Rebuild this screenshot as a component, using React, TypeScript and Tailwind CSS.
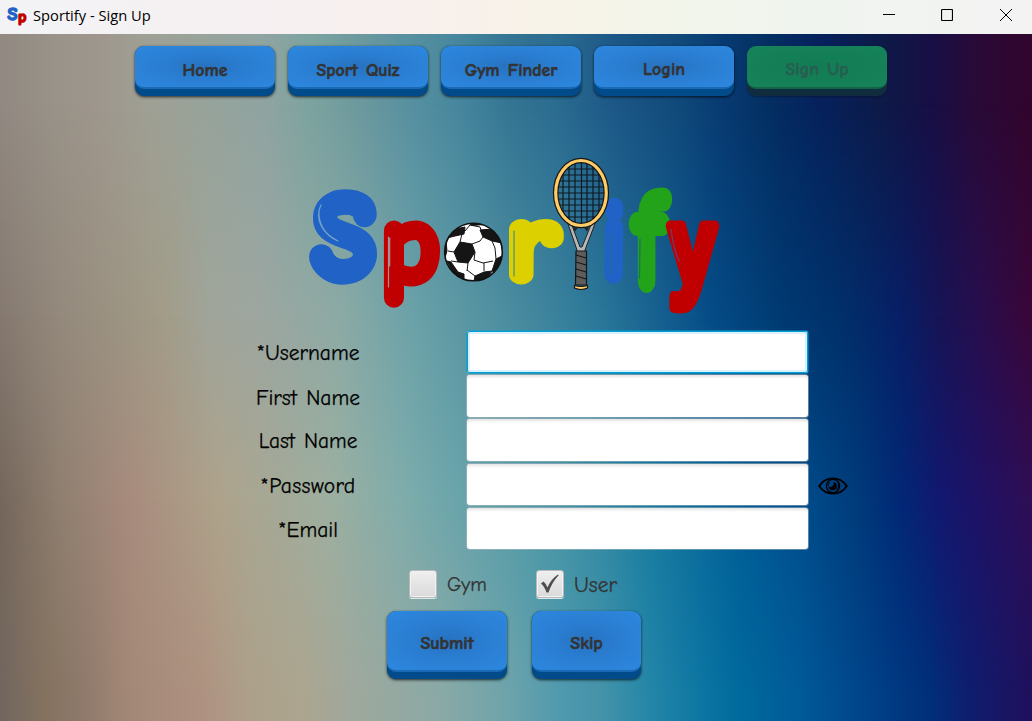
import React, { useState } from "react";

type NavItem = { label: string; disabled?: boolean; raised?: boolean };

const navItems: NavItem[] = [
  { label: "Home" },
  { label: "Sport Quiz" },
  { label: "Gym Finder" },
  { label: "Login", raised: true },
  { label: "Sign Up", disabled: true, raised: true },
];

const comic = "font-['Comic_Sans_MS','Comic_Neue','Open_Sans',sans-serif]";
const logoFont = "'Comic Sans MS', 'Comic Neue', 'Open Sans', sans-serif";
const hookFont = "'Liberation Sans', sans-serif";

function Backdrop() {
  return (
    <div className="absolute inset-0">
      <div className="absolute inset-0 bg-[linear-gradient(90deg,#928982_0px,#989288_50px,#9f978d_100px,#9fa095_150px,#98a39a_200px,#8fa4a2_265px,#7ca39f_310px,#6c999e_360px,#5790a0_410px,#46869d_460px,#347593_510px,#2a6b90_560px,#1c5787_615px,#10497a_680px,#083b72_720px,#042e62_770px,#06215c_820px,#0d1a48_880px,#170f45_930px,#290a38_975px,#31052c_1032px)]" />
      <div className="absolute inset-0 bg-[linear-gradient(90deg,#857970_0px,#94897c_60px,#a29c88_165px,#a0a59a_210px,#9da6a0_260px,#8caaa5_340px,#6ca2a8_410px,#4f8fa0_500px,#2a7799_600px,#054c87_710px,#003a72_780px,#01306a_840px,#071f66_900px,#171455_940px,#280e4d_980px,#3a0638_1032px)] [mask-image:linear-gradient(180deg,transparent_10%,black_41%)]" />
      <div className="absolute inset-0 bg-[linear-gradient(90deg,#74665b_0px,#8f7f70_60px,#a88b7d_130px,#aea38b_220px,#a4a997_280px,#9dafa0_330px,#80adab_400px,#69a4ab_460px,#4595a5_560px,#177ba0_650px,#005d97_740px,#004d8c_800px,#003a7a_860px,#022876_900px,#121870_940px,#1f1265_980px,#2f0e55_1032px)] [mask-image:linear-gradient(180deg,transparent_41%,black_68%)]" />
      <div className="absolute inset-0 bg-[linear-gradient(90deg,#71665e_0px,#84725f_45px,#8f7a6b_85px,#a48877_130px,#ae9180_200px,#ada08a_250px,#aca58f_300px,#a0a89c_350px,#8aa9a6_440px,#6ca3ab_510px,#5099ae_560px,#4593a9_600px,#2486a8_650px,#0d76a2_700px,#006a9d_740px,#005a98_800px,#00458a_860px,#002f79_930px,#0f1d6e_970px,#1f105c_1032px)] [mask-image:linear-gradient(180deg,transparent_68%,black_96%)]" />
    </div>
  );
}

type Box = [number, number, number, number];
type GlyphProps = { ch: string; fill: string; box: Box; weight?: number; font?: string };

/* Ink bounds of one bold character set at 100px, relative to its origin. */
function inkBounds(ch: string, font: string): Box {
  const ctx = document.createElement("canvas").getContext("2d");
  if (!ctx) return [5, -70, 55, 0];
  ctx.font = `700 100px ${font}`;
  const m = ctx.measureText(ch);
  return [-m.actualBoundingBoxLeft, -m.actualBoundingBoxAscent, m.actualBoundingBoxRight, m.actualBoundingBoxDescent];
}

/* Stretches one character so that its ink, outline included, fills the given box. */
function Glyph({ ch, fill, box, weight = 8, font = logoFont }: GlyphProps) {
  const [x0, y0, x1, y1] = box;
  const [gx0, gy0, gx1, gy1] = inkBounds(ch, font);
  const sx = (x1 - x0) / (gx1 - gx0 + weight);
  const sy = (y1 - y0) / (gy1 - gy0 + weight);
  const tx = x0 - (gx0 - weight / 2) * sx;
  const ty = y0 - (gy0 - weight / 2) * sy;
  return (
    <text
      transform={`matrix(${sx} 0 0 ${sy} ${tx} ${ty})`}
      fontSize="100"
      fontWeight="700"
      fontFamily={font}
      fill={fill}
      stroke={fill}
      strokeWidth={weight}
      strokeLinejoin="round"
    >
      {ch}
    </text>
  );
}

function Logo() {
  return (
    <svg width="430" height="170" viewBox="300 150 430 170" className="block">
      <Glyph ch="S" fill="#2062c6" weight={12} box={[309, 188, 378, 285]} />
      <Glyph ch="p" fill="#c00000" weight={8} box={[384, 221, 441, 308]} />
      <Glyph ch="r" fill="#dcd000" weight={9} box={[509, 219, 564, 285]} />
      <Glyph ch="i" fill="#2062c6" weight={8} box={[604.5, 199, 624, 285]} />
      <Glyph ch="f" fill="#22a31a" weight={8} box={[628, 188, 673, 293]} />
      <Glyph ch="y" fill="#c00000" weight={10} font={hookFont} box={[665, 220, 720, 314]} />
      <g fill="none" strokeLinecap="round" strokeWidth="1.200">
        <path d="M321 205c-7 14 2 29 17 36M319 211c-1 12 6 22 12 26" stroke="#74a4c4" />
        <path d="M388.500 237v50M389.700 238v28" stroke="#a98d91" />
        <path d="M514 231v45" stroke="#4c8a86" />
        <path d="M610.500 234v40" stroke="#206d9e" />
        <path d="M640 239l-.5 39" stroke="#166f78" />
        <path d="M671 229q2 18 8 32" stroke="#68406c" />
      </g>
      <g>
        <defs>
          <clipPath id="ball"><circle cx="473.500" cy="252" r="29" /></clipPath>
        </defs>
        <circle cx="473.500" cy="252" r="29" fill="#fff" />
        <g clipPath="url(#ball)" fill="#151515" stroke="#151515" strokeWidth="1" strokeLinejoin="round">
          <path d="M460 242l12 2 3 8-7 11-10-1-4-10Z" />
          <path d="M480 230l13-1 9 8 0 6-10-2-9-4Z" />
          <path d="M447 238l8-9 10-2-1 7-9 2Z" />
          <path d="M468 222.500h18l-2 2-12 1Z" />
          <path d="M443 244l3-3 1 10-3 10Z" />
          <path d="M447 261l4 1 7 10 6 2v8l-10-7Z" />
          <path d="M475 276l9-4 8-1-6 9-12 1Z" />
          <path d="M496 259l6-3 1 4-8 12-3-1Z" />
          <path d="M501 240l2 10" />
          <g fill="none">
            <path d="M460 242l2-8 1-1M472 244l8-3 3-4M475 252l-1 8 9 3 10-2M468 263l-1 8M458 262l-7-1M454 252l-6-1M465 231l5-6 10 2 1 3M492 241l3 7 1 11M484 263l0 8M467 270l8 6" />
          </g>
        </g>
        <circle cx="473.500" cy="252" r="28.800" fill="none" stroke="#111" strokeWidth="1.600" />
      </g>
      <g>
        <defs>
          <clipPath id="strings"><ellipse cx="581" cy="193" rx="23" ry="31.500" /></clipPath>
        </defs>
        <path d="M567 221l10 29v2h8v-2l11-29-3-1-11 27h-2l-10-27Z" fill="#b7b7b7" stroke="#222" strokeWidth="1" />
        <path d="M573 227.500h5l-3 4Zm16 0h-5l3 4Z" fill="#222" />
        <g clipPath="url(#strings)" stroke="#101820" strokeWidth="1.200">
          <path d="M563 160v66M569 160v66M575 160v66M581.500 160v66M587 160v66M593 160v66M599 160v66" />
          <path d="M555 169h52M555 175h52M555 181h52M555 187h52M555 193h52M555 199h52M555 205h52M555 211h52M555 217h52" />
        </g>
        <ellipse cx="581" cy="193" rx="25.300" ry="32.500" fill="none" stroke="#161616" strokeWidth="5.600" />
        <ellipse cx="581" cy="193" rx="25.300" ry="32.500" fill="none" stroke="#ffcc67" strokeWidth="3.200" />
        <path d="M576 251h10.500v34h-11Z" fill="#5d5d5d" stroke="#161616" strokeWidth="1.200" />
        <path d="M576 255l10 3M576 262l10 3M576 269l10 3M576 276l10 3" stroke="#161616" strokeWidth="1.200" />
        <path d="M574.500 285.500q6.500 2 13 0v2.500q-6.500 3-13 0Z" fill="#ffcc67" stroke="#161616" strokeWidth="1.200" />
      </g>
    </svg>
  );
}

type ButtonProps = NavItem & { size: string; text: string };

function GlossyButton({ label, disabled, raised, size, text }: ButtonProps) {
  const base = disabled
    ? "bg-[linear-gradient(180deg,#0e3a48_0%,#102c3e_100%)] shadow-[0_1px_2px_rgba(0,0,0,0.3)]"
    : "bg-[#024b8b] shadow-[0_1px_3px_rgba(0,0,0,0.75)]";
  const face = disabled
    ? "bg-[radial-gradient(ellipse_at_center,#127c54_0%,#17835b_100%)] text-[#265f50] border-b-[#126348]"
    : "bg-[radial-gradient(ellipse_at_center,#2772c0_0%,#2a7ed2_45%,#2d88df_100%)] text-[#333333] border-b-[#1a69b6]";
  return (
    <button disabled={disabled} className={`flex flex-col rounded-[9px] pb-[7px] ${size} ${base}`}>
      <span
        className={`flex w-full flex-1 items-center justify-center rounded-[9px] border-b-2 font-bold whitespace-nowrap [-webkit-text-stroke:0.6px_currentColor] ${raised ? "pt-[5px]" : "pt-[7px]"} ${face} ${text}`}
      >
        {label}
      </span>
    </button>
  );
}

function EyeIcon() {
  return (
    <svg width="30" height="20" viewBox="0 0 30 20" fill="none" stroke="#000">
      <path d="M1.200 10C8-.2 22-.2 28.800 10 22 20.200 8 20.200 1.200 10Z" strokeWidth="1.900" />
      <circle cx="15" cy="10" r="6.600" strokeWidth="1.300" />
      <path d="M15.500 6a4.200 4.200 0 1 1-5 4.500l2.500.5 2.500-2Z" fill="#000" stroke="none" />
      <path d="M12 6q-2 1.500-2 4M19.500 6a6 6 0 0 1-1 8" strokeWidth="1" />
    </svg>
  );
}

type FieldProps = { label: string; focused?: boolean; icon?: React.ReactNode; tune: string };

function Field({ label, focused, icon, tune }: FieldProps) {
  return (
    <label className="flex h-[44.200px] items-start">
      <span className="flex h-[44px] w-[104px] shrink-0 items-center justify-center pt-px whitespace-nowrap text-black [-webkit-text-stroke:0.25px_currentColor]">
        <span className={tune}>{label}</span>
      </span>
      <input
        className={
          "ml-[107px] h-[41.500px] w-[341px] rounded-[3px] bg-white px-2 outline-none " +
          (focused
            ? "shadow-[inset_0_0_0_1px_#039ed3,inset_0_0_0_3px_#d8f1fa,0_0_0_1px_#039ed380]"
            : "shadow-[0_0_0_1px_#b5bcc080,inset_0_3px_3px_-1px_#e4e4e4]")
        }
      />
      {icon && <span className="mt-3 ml-[10px]">{icon}</span>}
    </label>
  );
}

type CheckProps = { label: string; checked: boolean; onChange: () => void; width: string };

function Check({ label, checked, onChange, width }: CheckProps) {
  return (
    <button onClick={onChange} className="flex h-7 items-center gap-[10px] text-[#333333]">
      <span className="flex size-7 shrink-0 items-center justify-center rounded-[3px] border border-[#b9b9bb] bg-[linear-gradient(180deg,#efefef,#dadada)] shadow-[0_1px_0_#dce8e8,inset_0_0_0_1px_#f3f3f3]">
        {checked && (
          <svg width="20" height="20" viewBox="0 0 20 20">
            <path d="M1 9.500 3.500 7.500q2.500 2 4 6Q11 5 18 .5l.7.700Q12 8 8.500 18.500H6.500Q4.500 12.500 1 9.500Z" fill="#4d4d4d" />
          </svg>
        )}
      </span>
      <span className={`pt-[3px] text-left whitespace-nowrap [-webkit-text-stroke:0.25px_currentColor] ${width}`}>{label}</span>
    </button>
  );
}

export default function App() {
  const [role, setRole] = useState("User");
  return (
    <div className="flex h-[721px] w-[1032px] flex-col overflow-hidden">
      <header className="flex h-[34px] shrink-0 items-center bg-[linear-gradient(90deg,#f3f3f5_0%,#f6f0f2_25%,#f8f0ed_40%,#f8f3e8_54%,#f1f5eb_68%,#f0f4ef_80%,#f3f3f3_100%)] pl-[7px]">
        <svg width="21" height="22" viewBox="0 0 21 22" className="-mt-1">
          <text y="16" fontFamily={logoFont} fontWeight="700" strokeWidth="1.600" strokeLinejoin="round">
            <tspan x="0.500" fontSize="18" fill="#2062c6" stroke="#2062c6">S</tspan>
            <tspan x="11" y="17.500" fontSize="16" fill="#c00000" stroke="#c00000">p</tspan>
          </text>
        </svg>
        <h1 className="-mt-[3px] ml-[5px] font-['Open_Sans',sans-serif] text-[14.700px] text-black">Sportify - Sign Up</h1>
        <div className="-mt-1 mr-5 ml-auto flex items-center gap-[46px]">
          <svg width="12" height="12" viewBox="0 0 12 12" stroke="#000" className="relative -left-px"><path d="M0 5.500h12" /></svg>
          <svg width="12" height="12" viewBox="0 0 12 12" fill="none" stroke="#000" className="relative -left-px"><rect x=".5" y=".5" width="11" height="11" rx="1" strokeWidth="1.200" /></svg>
          <svg width="12" height="12" viewBox="0 0 12 12" stroke="#000"><path d="M0 0l12 12M12 0 0 12" /></svg>
        </div>
      </header>
      <main className={`relative flex-1 ${comic}`}>
        <Backdrop />
        <div className="relative flex flex-col">
          <nav className="flex gap-[13px] pt-3 pl-[135px]">
            {navItems.map((n) => (
              <GlossyButton key={n.label} {...n} size="h-[50px] w-[140px]" text="text-[17.800px] [word-spacing:2px]" />
            ))}
          </nav>
          <div className="mt-[54px] pl-[300px]">
            <Logo />
          </div>
          <form className="mt-[11px] flex flex-col pl-[256px]" onSubmit={(e) => e.preventDefault()}>
            <Field label="*Username" focused tune="text-[21.500px]" />
            <Field label="First Name" tune="text-[21.500px] [word-spacing:2px]" />
            <Field label="Last Name" tune="text-[21.300px] [word-spacing:2px]" />
            <Field label="*Password" icon={<EyeIcon />} tune="text-[21.500px] tracking-[0.4px]" />
            <Field label="*Email" tune="text-[21.500px]" />
          </form>
          <div className="mt-[18px] flex gap-[50px] pl-[409px]">
            <Check label="Gym" checked={role === "Gym"} onChange={() => setRole("Gym")} width="w-[39px] text-[20px]" />
            <Check label="User" checked={role === "User"} onChange={() => setRole("User")} width="w-[44px] text-[21.500px]" />
          </div>
          <div className="mt-[13px] flex gap-[25px] pl-[387px]">
            <GlossyButton label="Submit" size="h-[68px] w-[120px]" text="text-[18px]" />
            <GlossyButton label="Skip" size="h-[68px] w-[109px]" text="text-[18px]" />
          </div>
        </div>
      </main>
    </div>
  );
}
